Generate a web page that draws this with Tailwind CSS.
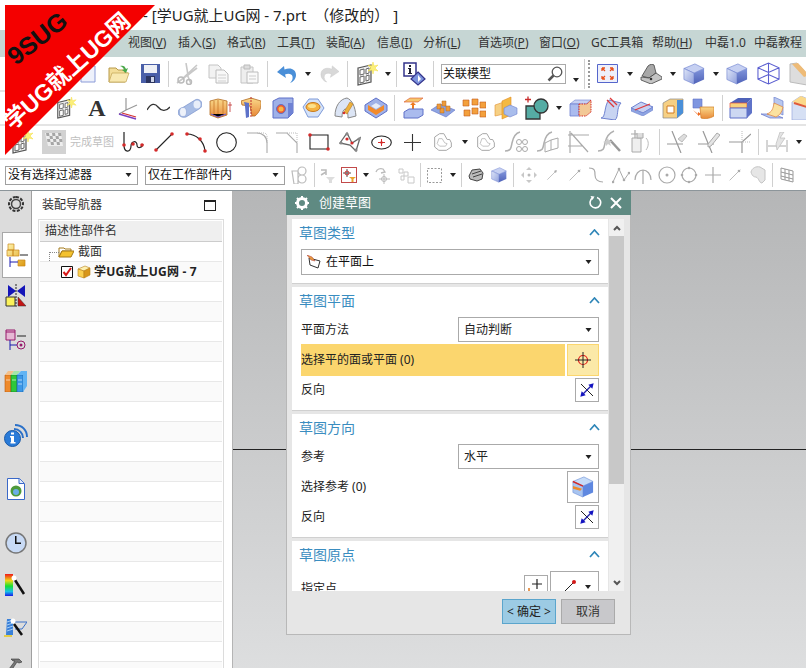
<!DOCTYPE html>
<html lang="en">
  <head>
    <meta charset="UTF-8" />
    <title>创建草图</title>
    <script src="https://cdn.jsdelivr.net/npm/@tailwindcss/browser@4"></script>
  </head>
  <body class="bg-white">
    <!-- shared icons -->
    <svg class="absolute w-0 h-0">
      <defs>
        <linearGradient id="gb" x1="0" y1="0" x2="1" y2="1"><stop offset="0" stop-color="#dfe6f8" /><stop offset="1" stop-color="#8f9fdc" /></linearGradient>
        <linearGradient id="gbd" x1="0" y1="0" x2="0" y2="1"><stop offset="0" stop-color="#8296dc" /><stop offset="1" stop-color="#4f62b8" /></linearGradient>
        <linearGradient id="go" x1="0" y1="0" x2="0" y2="1"><stop offset="0" stop-color="#f9d98a" /><stop offset="1" stop-color="#e98a3a" /></linearGradient>
        <linearGradient id="gy" x1="0" y1="0" x2="1" y2="1"><stop offset="0" stop-color="#fff6b0" /><stop offset="1" stop-color="#dd9a10" /></linearGradient>
      </defs>
      <symbol id="dd" viewBox="0 0 6 4"><path d="M0 0h6L3 4z" fill="#222" /></symbol>
      <symbol id="cube" viewBox="0 0 24 24"><path d="M1 6l12-5 10 5-11 5z" fill="#c6d0f2" stroke="#6f82d0" stroke-width=".7" /><path d="M1 6l11 5v12L1 18z" fill="url(#gb)" stroke="#6f82d0" stroke-width=".7" /><path d="M12 11l11-5v12l-11 5z" fill="url(#gbd)" /></symbol>
      <symbol id="wire" viewBox="0 0 24 24"><path d="M1 6l11-5 11 5v12l-11 5L1 18zM1 6l11 5 11-5M12 11v12M12 1v12M1 18l11-5 11 5" fill="none" stroke="#5a5ed0" stroke-width="1.1" /></symbol>
      <symbol id="star" viewBox="0 0 24 24"><path d="M3 6l13-3v17L3 23z" fill="#eee" stroke="#555" stroke-width="1.2" /><path d="M5 8l4-1v5l-4 1zM11 7l3-1v5l-3 1zM5 15l4-1v6l-4 1zM11 14l3-1v5l-3 1z" fill="#fff" stroke="#666" stroke-width="1" /><path d="M18 0l1 4 4-1-3 3 3 3-4-1-1 4-1-4-4 1 3-3-3-3 4 1z" fill="#fbef7a" stroke="#f3dc40" stroke-width=".5" /></symbol>
      <symbol id="flip" viewBox="0 0 24 24"><path d="M3 3l18 18" stroke="#111" stroke-width="1.400" /><path d="M5 19L19 5" stroke="#22a" stroke-width="2" /><path d="M22 2l-2 8-6-6zM2 22l2-8 6 6z" fill="#1414c0" /></symbol>
      <symbol id="gshape" viewBox="0 0 24 24"><path d="M2 6l6-4h5l4 7h3l2 4v5l-6 4H7l-5-4z" fill="none" stroke="#a8a8a8" stroke-width="1.2" /><path d="M7 8h4l3 5 3 1-2 3H8l-3-3z" fill="none" stroke="#b8b8b8" /></symbol>
      <symbol id="gdot" viewBox="0 0 24 24"><path d="M4 20L20 4" stroke="#aaa" stroke-width="1.2" /><circle cx="18" cy="6" r="2" fill="#aaa" /></symbol>
    </svg>

    <div class="relative w-[806px] h-[668px] overflow-hidden font-['Noto_Sans','Noto_Sans_CJK_SC',sans-serif] text-[12px] text-[#222]">
      <!-- title -->
      <div class="h-[30px] pl-[143px] flex items-center text-[15px] text-[#222] bg-white whitespace-pre">- [学UG就上UG网 - 7.prt  （修改的） ]</div>

      <!-- menu -->
      <div class="h-[27px] pb-[2px] bg-[#c6d6d4] flex items-center pl-[128px] text-[#333] whitespace-nowrap">
        <span class="w-[50px]">视图(<u>V</u>)</span>
        <span class="w-[49px]">插入(<u>S</u>)</span>
        <span class="w-[50px]">格式(<u>R</u>)</span>
        <span class="w-[49px]">工具(<u>T</u>)</span>
        <span class="w-[51px]">装配(<u>A</u>)</span>
        <span class="w-[46px]">信息(<u>I</u>)</span>
        <span class="w-[55px]">分析(<u>L</u>)</span>
        <span class="w-[61px]">首选项(<u>P</u>)</span>
        <span class="w-[52px]">窗口(<u>O</u>)</span>
        <span class="w-[61px]">GC工具箱</span>
        <span class="w-[53px]">帮助(<u>H</u>)</span>
        <span class="w-[49px]">中磊1.0</span>
        <span>中磊教程</span>
      </div>

      <!-- toolbar row 1 -->
      <div class="h-[33px] flex items-center overflow-hidden">
        <svg class="w-[16px] h-[18px] ml-[80px] shrink-0" viewBox="0 0 16 18"><path d="M1 1h14v16H1z" fill="#eef1fb" stroke="#8b9bd8" /></svg>
        <svg class="w-[22px] h-[20px] ml-[12px] shrink-0" viewBox="0 0 22 20"><path d="M1 18V4h7l2 2h7v3h3l-3 9z" fill="#f3dd98" stroke="#b89a4a" /><path d="M4 9h17l-3 9H1z" fill="#f8e8b0" stroke="#c2a454" stroke-width=".7" /><path d="M12 2c3-1 5 0 6 3l2-1-2 5-4-3 2-.5c-1-2-2-3-4-3.5z" fill="#4aa84a" /></svg>
        <svg class="w-[19px] h-[19px] ml-[11px] shrink-0" viewBox="0 0 19 19"><path d="M0 0h19v19H0z" fill="#4a5fa8" /><path d="M3 1h13v8H3z" fill="#eef0f5" /><path d="M5 12h9v7H5z" fill="#2c3560" /><path d="M10 13h3v5h-3z" fill="#cfd6ea" /></svg>
        <div class="w-px h-[26px] ml-[8px] bg-[#d0d0d0] shrink-0"></div>
        <svg class="w-[22px] h-[22px] ml-[7px] shrink-0" viewBox="0 0 22 22"><path d="M1 20L21 5 11 13M21 2L5 17" fill="none" stroke="#c8c8c8" stroke-width="1.6" /><path d="M10 0l2 12M15 21l-4-10" stroke="#c8c8c8" stroke-width="1.6" /><circle cx="5" cy="17" r="3" fill="none" stroke="#bbb" stroke-width="1.5" /><circle cx="13" cy="19" r="2.5" fill="none" stroke="#bbb" stroke-width="1.5" /></svg>
        <svg class="w-[21px] h-[20px] ml-[10px] shrink-0" viewBox="0 0 21 20"><path d="M1 1h9l3 3v10H1z" fill="#f2f2f2" stroke="#c4c4c4" /><path d="M8 6h8l4 4v9H8z" fill="#f8f8f8" stroke="#bcbcbc" /><path d="M10 11h8M10 14h8M10 17h8" stroke="#d0d0d0" /></svg>
        <svg class="w-[19px] h-[20px] ml-[11px] shrink-0" viewBox="0 0 19 20"><path d="M1 3h12v16H1z" fill="#eee" stroke="#c4c4c4" /><path d="M4 1h6v4H4z" fill="#ddd" stroke="#bbb" /><path d="M7 8h11v11H7z" fill="#fafafa" stroke="#bcbcbc" /><path d="M9 12h7M9 15h7" stroke="#ccc" /></svg>
        <div class="w-px h-[26px] ml-[8px] bg-[#d0d0d0] shrink-0"></div>
        <svg class="w-[20px] h-[20px] ml-[9px] shrink-0" viewBox="0 0 20 20"><path d="M0 8l7-6 .5 3.500C13 3 19 5 19 11c0 4-3 7-6 8 2-2 3-4 2.500-6.500C15 9.500 11 9 8 10.500L9 14z" fill="#4a8fd8" /></svg>
        <svg class="w-[6px] h-[4px] ml-[8px] shrink-0"><use href="#dd" /></svg>
        <svg class="w-[19px] h-[19px] ml-[9px] shrink-0" viewBox="0 0 20 20"><path d="M20 8l-7-6-.5 3.500C7 3 1 5 1 11c0 4 3 7 6 8-2-2-3-4-2.500-6.500C5 9.500 9 9 12 10.500L11 14z" fill="#d8d8d8" stroke="#c8c8c8" stroke-width=".5" /></svg>
        <div class="w-px h-[26px] ml-[8px] bg-[#d0d0d0] shrink-0"></div>
        <svg class="w-[24px] h-[24px] ml-[7px] shrink-0"><use href="#star" /></svg>
        <svg class="w-[6px] h-[4px] ml-[6px] shrink-0"><use href="#dd" /></svg>
        <div class="w-px h-[26px] ml-[5px] bg-[#d0d0d0] shrink-0"></div>
        <svg class="w-[23px] h-[24px] ml-[6px] shrink-0" viewBox="0 0 23 24"><path d="M1 1h12v13H1z" fill="#fff" stroke="#33338a" stroke-width="1.5" /><path d="M6 3h2v2H6zM5 6h3v5h1v1H5v-1h1V7H5z" fill="#223" /><path d="M15 10l7 7-7 6-7-6z" fill="#7c93dd" stroke="#33338a" stroke-width="1.2" /><path d="M15 13l3 4-3 3z" fill="#fff" /></svg>
        <div class="w-px h-[26px] ml-[7px] bg-[#d0d0d0] shrink-0"></div>
        <div class="w-[125px] h-[20px] ml-[7px] shrink-0 border border-[#aaa] flex items-center pl-[1px] pr-[2px] justify-between text-[#111]">
          <span>关联模型</span>
          <svg class="w-[16px] h-[16px]" viewBox="0 0 16 16"><circle cx="10" cy="6" r="4.800" fill="#fff" stroke="#555" stroke-width="1.300" /><path d="M6.500 9.500L1.500 14.500" stroke="#555" stroke-width="2.500" /></svg>
        </div>
        <svg class="w-[6px] h-[4px] ml-[7px] mt-[12px] shrink-0"><use href="#dd" /></svg>
        <div class="w-px h-[30px] ml-[5px] bg-[#d0d0d0] shrink-0"></div>
        <div class="w-[2px] h-[28px] ml-[3px] shrink-0 border-l-2 border-dotted border-[#999]"></div>
        <svg class="w-[21px] h-[19px] ml-[7px] shrink-0" viewBox="0 0 21 19"><path d="M.5.5h20v18H.5z" fill="#eef0fb" stroke="#5566cc" /><path d="M5 4l3 3M5 4h3M5 4v3M16 4l-3 3M16 4h-3M16 4v3M5 15l3-3M5 15h3M5 15v-3M16 15l-3-3M16 15h-3M16 15v-3" stroke="#e8501c" stroke-width="1.300" fill="none" /></svg>
        <svg class="w-[6px] h-[4px] ml-[9px] shrink-0"><use href="#dd" /></svg>
        <svg class="w-[22px] h-[20px] ml-[7px] shrink-0" viewBox="0 0 22 20"><path d="M2 12L8 2c2-2 5-2 6-1l2 8-7 5z" fill="#a8a8a8" stroke="#444" stroke-width=".8" /><path d="M1 13l8 1 7-5 6 4v2l-11 5-10-4z" fill="#c4c4c4" stroke="#444" stroke-width=".8" /><circle cx="11" cy="15" r="1.300" fill="#333" /></svg>
        <svg class="w-[6px] h-[4px] ml-[8px] shrink-0"><use href="#dd" /></svg>
        <svg class="w-[22px] h-[22px] ml-[7px] shrink-0"><use href="#cube" /></svg>
        <svg class="w-[6px] h-[4px] ml-[8px] shrink-0"><use href="#dd" /></svg>
        <svg class="w-[22px] h-[22px] ml-[7px] shrink-0"><use href="#cube" /></svg>
        <svg class="w-[23px] h-[23px] ml-[9px] shrink-0"><use href="#wire" /></svg>
        <svg class="w-[24px] h-[24px] ml-[9px] shrink-0" viewBox="0 0 24 24"><path d="M1 2l7-1 12 13-2 9-17-3z" fill="#ddd" stroke="#bbb" /><path d="M3 2l6-1 11 12-5 2z" fill="#eebb77" /></svg>
      </div>

      <!-- toolbar row 2 -->
      <div class="h-[34px] border-t-2 border-[#e4e4e4] flex items-center overflow-hidden">
        <svg class="w-[22px] h-[22px] ml-[55px] shrink-0"><use href="#star" /></svg>
        <span class="w-[20px] ml-[10px] shrink-0 text-center text-[24px] leading-none font-bold font-['Liberation_Serif',serif] text-[#333]">A</span>
        <svg class="w-[20px] h-[24px] ml-[11px] shrink-0" viewBox="0 0 20 24"><path d="M8 14V2M8 14L19 9M8 14L1 18" stroke="#999" stroke-width="1.200" /><path d="M1 18l17 5" stroke="#7a3fc0" stroke-width="1.500" /><path d="M4 17l14 4" stroke="#d43030" stroke-width="1.200" /></svg>
        <svg class="w-[23px] h-[10px] ml-[9px] shrink-0" viewBox="0 0 23 10"><path d="M0 7C4 0 8 0 11 4s8 5 12 0" fill="none" stroke="#333" stroke-width="1.300" /></svg>
        <svg class="w-[24px] h-[20px] ml-[8px] shrink-0" viewBox="0 0 24 20"><path d="M4 10L17 2c3-2 7 1 7 4 0 2-1 4-3 5L8 19c-4 1-8-1-8-5 0-2 2-4 4-4z" fill="#a7bce4" stroke="#7a92cc" stroke-width=".7" /><ellipse cx="19" cy="6.500" rx="3.500" ry="4" fill="#e8eef9" /><ellipse cx="5" cy="14" rx="3.500" ry="4.500" fill="#eef2fa" stroke="#8aa0d4" stroke-width=".6" /></svg>
        <svg class="w-[23px] h-[22px] ml-[7px] shrink-0" viewBox="0 0 23 22"><path d="M1 4l8-2 9 2v14l-9 3-8-3z" fill="url(#go)" stroke="#b36a20" stroke-width=".8" /><path d="M5 4v15M9 3v18M14 4v15" stroke="#c8772a" stroke-width=".8" /><path d="M2 17l7 3 8-3" stroke="#7a5fd0" /><path d="M21 5v10M19 8h4" stroke="#c03030" stroke-width=".8" /></svg>
        <svg class="w-[20px] h-[22px] ml-[9px] shrink-0" viewBox="0 0 20 22"><path d="M0 4l10-3 10 3c1 6-2 12-6 15h-3L9 9 1 8z" fill="url(#go)" stroke="#b36a20" stroke-width=".8" /><path d="M3 5l5 1v14l-3 1-1-12z" fill="#5d72c9" /><path d="M10 0v20" stroke="#c03030" stroke-dasharray="2 1" /></svg>
        <svg class="w-[22px] h-[22px] ml-[11px] shrink-0" viewBox="0 0 22 22"><path d="M1 4l6-3h14v15l-5 5H1z" fill="#9fb1e8" stroke="#5f70c8" /><path d="M16 6h5v10l-5 5z" fill="#6f82d4" /><circle cx="9" cy="12" r="4.500" fill="#f05a30" stroke="#5f70c8" /><circle cx="9" cy="12" r="2.500" fill="#f6b94a" /></svg>
        <svg class="w-[23px] h-[20px] ml-[8px] shrink-0" viewBox="0 0 23 20"><path d="M1 9l6-8h9l6 9-6 9H6z" fill="#d4e2f8" stroke="#7e9ad8" /><ellipse cx="11" cy="9" rx="7" ry="4.500" fill="#f5b342" stroke="#c7791c" /><ellipse cx="10" cy="8" rx="4" ry="2" fill="#fbe18c" /></svg>
        <svg class="w-[23px] h-[22px] ml-[9px] shrink-0" viewBox="0 0 23 22"><path d="M1 19C1 9 6 2 13 1c5 2 8 8 9 18l-8 2c0-6-1-9-3-9-2 1-3 4-3 8z" fill="#dce5f5" stroke="#888" /><path d="M10 15l6-10 3 2-6 10z" fill="#edb13c" stroke="#b8791e" stroke-width=".6" /><circle cx="10" cy="16" r="1.300" fill="#d43030" /></svg>
        <svg class="w-[24px] h-[22px] ml-[7px] shrink-0" viewBox="0 0 24 22"><path d="M12 1l11 7v6l-11 7L1 14V8z" fill="#9fb1e8" stroke="#5f70c8" /><path d="M4 8l8 5 8-5v5l-8 5-8-5z" fill="#f28a2a" /><path d="M7 9l5 3 5-3-5-3z" fill="#e6ecfa" /></svg>
        <div class="w-px h-[26px] ml-[6px] bg-[#d0d0d0] shrink-0"></div>
        <svg class="w-[21px] h-[22px] ml-[8px] shrink-0" viewBox="0 0 21 22"><path d="M1 5l6-4h13l-5 4z" fill="#f5c66e" stroke="#d9502a" stroke-width=".6" /><path d="M9 14V8H7l3-3 3 3h-2v6z" fill="#ee7a20" /><path d="M1 15l5-3h14v6l-5 3H1z" fill="#aabbee" stroke="#5f70c8" /></svg>
        <svg class="w-[24px] h-[20px] ml-[7px] shrink-0" viewBox="0 0 24 20"><path d="M0 12l9-6 15 6-9 7z" fill="#8ea5e2" stroke="#5f70c8" stroke-width=".6" /><path d="M6 6h4v5H6zM11 3h4v5h-4zM15 8h4v5h-4zM9 10h4v5H9z" fill="#ee9a3a" stroke="#b36a20" stroke-width=".5" /></svg>
        <svg class="w-[24px] h-[20px] ml-[7px] shrink-0" viewBox="0 0 24 20"><g fill="#f3a03c" stroke="#c45a20" stroke-width=".6"><path d="M1 2h6v6H1zM10 1h6v6h-6zM18 4h6v6h-6zM2 12h6v6H2zM10 10h6v6h-6zM18 13h6v6h-6z" /></g></svg>
        <svg class="w-[24px] h-[24px] ml-[8px] shrink-0" viewBox="0 0 24 24"><path d="M1 9l9-3v12l-9 2z" fill="#f6d084" stroke="#e09030" stroke-width=".6" /><path d="M8 5l9-4v18l-9 4z" fill="#f4b942" stroke="#e08a20" stroke-width=".6" /><path d="M10 12l6-3 7 3v6l-7 3-6-3z" fill="#a9bdec" stroke="#6f82d0" stroke-width=".6" /></svg>
        <svg class="w-[24px] h-[24px] ml-[7px] shrink-0" viewBox="0 0 24 24"><path d="M1 10h14v13H1z" fill="#55aca4" stroke="#333" stroke-width="1.300" /><circle cx="16" cy="10" r="7" fill="#55aca4" stroke="#333" stroke-width="1.300" /><path d="M0 3.500h6M3 .5v6" stroke="#c92b2b" stroke-width="1.300" /></svg>
        <svg class="w-[6px] h-[4px] ml-[7px] shrink-0"><use href="#dd" /></svg>
        <svg class="w-[23px] h-[18px] ml-[7px] shrink-0" viewBox="0 0 23 18"><path d="M1 5l5-4h16l-5 4z" fill="#c6d0f2" stroke="#6f82d0" stroke-width=".6" /><path d="M1 5h9v12H1z" fill="#aabbee" stroke="#6f82d0" stroke-width=".8" /><path d="M10 5h8l4-4v12l-5 4h-7z" fill="#f2c896" stroke="#d42a2a" stroke-dasharray="1.500 1" /></svg>
        <svg class="w-[22px] h-[23px] ml-[8px] shrink-0" viewBox="0 0 22 23"><path d="M1 21c5 0 3-13 8-18l12 3c-5 5-2 14-6 17z" fill="#c8d4f2" stroke="#6f82d0" /><path d="M7 3l7 7M10 1l7 7" stroke="#e03a3a" stroke-width="1.300" /></svg>
        <svg class="w-[22px] h-[15px] ml-[9px] shrink-0" viewBox="0 0 22 15"><path d="M0 7l10-6 12 5-10 6z" fill="#c6d0f2" stroke="#6f82d0" /><path d="M0 7v3l12 5 10-6V6l-10 6z" fill="#8ea5e2" stroke="#6f82d0" stroke-width=".6" /><path d="M4 9L19 3" stroke="#e03a3a" stroke-width="1.200" /></svg>
        <svg class="w-[22px] h-[22px] ml-[9px] shrink-0" viewBox="0 0 22 22"><path d="M1 6l7-4h13v14l-6 5H1z" fill="#f6d084" stroke="#888" stroke-width=".7" /><path d="M5 9h7v7H5z" fill="#fff" stroke="#d07a20" /><path d="M15 3h6v13l-6 5z" fill="#4a8fd8" /></svg>
        <svg class="w-[22px] h-[22px] ml-[8px] shrink-0" viewBox="0 0 22 22"><path d="M1 2h9v9H1z" fill="#7f96e0" stroke="#5f70c8" stroke-width=".6" /><path d="M8 10h14v9c-5 3-10 3-13 2z" fill="url(#go)" stroke="#d07a20" stroke-width=".7" /><path d="M1 13l5 4v-2l3 2-3 2v-1z" fill="#ee6a20" /></svg>
        <div class="w-px h-[26px] ml-[8px] bg-[#d0d0d0] shrink-0"></div>
        <svg class="w-[24px] h-[22px] ml-[6px] shrink-0" viewBox="0 0 24 22"><path d="M1 6l8-5h14l-5 5z" fill="#4f62b8" /><path d="M1 6h17v5H1z" fill="#f8d27e" stroke="#e0503a" stroke-width=".7" /><path d="M1 11h17v10H1z" fill="#cdd8f2" stroke="#5f70c8" /><path d="M18 6l5-5v15l-5 5z" fill="#5f73c8" /></svg>
        <svg class="w-[23px] h-[22px] ml-[8px] shrink-0" viewBox="0 0 23 22"><path d="M13 0l9 4v14l-9-4z" fill="#b8c7ee" stroke="#6f82d0" stroke-width=".7" /><path d="M0 17l9 4h13l-9-4z" fill="#b8c7ee" stroke="#5f70c8" stroke-width=".7" /><path d="M6 17c5-2 6-5 7-11l9 4c-1 5-3 8-7 10z" fill="#fbe2a0" stroke="#e0803a" stroke-width=".7" /></svg>
        <svg class="w-[24px] h-[24px] ml-[7px] shrink-0" viewBox="0 0 24 24"><path d="M1 6l9-6 14 6v18H1z" fill="#d6e0f4" stroke="#98a8dc" stroke-width=".7" /><path d="M1 6l9-6 14 6-9 4z" fill="#fbd98a" /><path d="M3 7l13 4" stroke="#e05a3a" stroke-width="2" /></svg>
      </div>

      <!-- toolbar row 3 -->
      <div class="h-[34px] border-t-2 border-[#e4e4e4] flex items-center overflow-hidden">
        <svg class="w-[24px] h-[24px] ml-[10px] shrink-0"><use href="#star" /></svg>
        <svg class="w-[24px] h-[24px] ml-[8px] shrink-0" viewBox="0 0 24 24"><path d="M0 0h24v24H0z" fill="#d2d2d2" /><path d="M3 3h16l2 13H6z" fill="#eee" /><path d="M4 3h3l.5 3h-3zM10 3h3l.5 3h-3zM16 3h3l.5 3h-3zM7.500 6h3l.5 3H8zM13.500 6h3l.5 3h-3zM5 9h3l.5 3h-3zM11 9h3l.5 3h-3zM17 9h3l.5 3h-3zM8.500 12h3l.5 3H9zM14.500 12h3l.5 3h-3z" fill="#a6a6a6" /></svg>
        <span class="w-[44px] ml-[4px] shrink-0 text-[11px] text-[#c0c0c0] whitespace-nowrap">完成草图</span>
        <svg class="w-[22px] h-[22px] ml-[8px] shrink-0" viewBox="0 0 22 22"><path d="M2 1v13c0 8 7 8 7 1 0-5 6-6 6-1 0 4 5 3 6-1" fill="none" stroke="#222" stroke-width="1.200" /><circle cx="2" cy="14" r="1.800" fill="#d42a2a" /><circle cx="11" cy="13" r="1.800" fill="#d42a2a" /><circle cx="20" cy="14" r="1.800" fill="#d42a2a" /></svg>
        <svg class="w-[20px] h-[20px] ml-[10px] shrink-0" viewBox="0 0 20 20"><path d="M2 18L18 2" stroke="#222" stroke-width="1.100" /><circle cx="2" cy="18" r="1.800" fill="#d42a2a" /><circle cx="18" cy="2" r="1.800" fill="#d42a2a" /></svg>
        <svg class="w-[22px] h-[21px] ml-[11px] shrink-0" viewBox="0 0 22 21"><path d="M2 2c9 0 17 7 18 17" fill="none" stroke="#222" stroke-width="1.200" /><circle cx="2" cy="2" r="1.800" fill="#d42a2a" /><circle cx="15" cy="7" r="1.800" fill="#d42a2a" /><circle cx="20" cy="19" r="1.800" fill="#d42a2a" /></svg>
        <svg class="w-[21px] h-[21px] ml-[9px] shrink-0" viewBox="0 0 21 21"><circle cx="10.500" cy="10.500" r="9.800" fill="none" stroke="#222" stroke-width="1.100" /></svg>
        <svg class="w-[21px] h-[21px] ml-[10px] shrink-0" viewBox="0 0 21 21"><path d="M0 1h10c6 0 10 4 10 10v10" fill="none" stroke="#aaa" stroke-width="1.100" /><path d="M10 1h8l2 2v8" fill="none" stroke="#bbb" stroke-dasharray="1 1" /></svg>
        <svg class="w-[22px] h-[21px] ml-[8px] shrink-0" viewBox="0 0 22 21"><path d="M0 1h11l10 10v10" fill="none" stroke="#aaa" stroke-width="1.100" /><path d="M11 1h10v10" fill="none" stroke="#bbb" stroke-dasharray="1 1" /></svg>
        <svg class="w-[22px] h-[18px] ml-[10px] shrink-0" viewBox="0 0 22 18"><path d="M2 2h18v14H2z" fill="none" stroke="#222" stroke-width="1.100" /><circle cx="2" cy="2" r="1.800" fill="#d42a2a" /><circle cx="20" cy="16" r="1.800" fill="#d42a2a" /></svg>
        <svg class="w-[22px] h-[22px] ml-[9px] shrink-0" viewBox="0 0 22 22"><path d="M1 12L8 2l5 10 8-5-4 13-6-6z" fill="none" stroke="#666" stroke-width="1.300" /><circle cx="8" cy="3" r="1.600" fill="#888" /><circle cx="8" cy="8" r="1.600" fill="#d42a2a" /><circle cx="13" cy="12" r="1.600" fill="#d42a2a" /><circle cx="20" cy="8" r="1.600" fill="#888" /><circle cx="17" cy="19" r="1.600" fill="#888" /><circle cx="2" cy="12" r="1.600" fill="#888" /></svg>
        <svg class="w-[21px] h-[15px] ml-[10px] shrink-0" viewBox="0 0 21 15"><ellipse cx="10.500" cy="7.500" rx="9.800" ry="6.500" fill="none" stroke="#222" stroke-width="1.100" /><path d="M10.500 4v7M7 7.500h7" stroke="#d42a2a" /><circle cx="10.500" cy="7.500" r="1.300" fill="#d42a2a" /></svg>
        <svg class="w-[17px] h-[17px] ml-[12px] shrink-0" viewBox="0 0 17 17"><path d="M8.500 0v17M0 8.500h17" stroke="#333" stroke-width="1.100" /></svg>
        <svg class="w-[20px] h-[20px] ml-[12px] shrink-0"><use href="#gshape" /></svg>
        <svg class="w-[6px] h-[4px] ml-[9px] shrink-0"><use href="#dd" /></svg>
        <svg class="w-[20px] h-[20px] ml-[8px] shrink-0"><use href="#gshape" /></svg>
        <svg class="w-[23px] h-[22px] ml-[9px] shrink-0" viewBox="0 0 23 22"><path d="M0 20c6 0 6-3 7-8s4-10 8-11" fill="none" stroke="#b0b0b0" stroke-width="1.500" /><g fill="none" stroke="#aaa"><circle cx="14" cy="11" r="2.500" /><circle cx="20" cy="11" r="2.500" /><circle cx="14" cy="18" r="2.500" /><circle cx="20" cy="18" r="2.500" /></g></svg>
        <svg class="w-[22px] h-[22px] ml-[9px] shrink-0" viewBox="0 0 22 22"><path d="M0 20c6 0 6-3 7-8s4-10 8-11" fill="none" stroke="#b0b0b0" stroke-width="1.500" /><path d="M8 12l6-3v10l-6 2zM14 9l7-2v10l-7 2" fill="none" stroke="#aaa" /></svg>
        <svg class="w-[22px] h-[22px] ml-[9px] shrink-0" viewBox="0 0 22 22"><path d="M2 0v22M0 4h21M0 15h15M3 2l17 19" fill="none" stroke="#aaa" stroke-width="1.200" /></svg>
        <svg class="w-[24px] h-[24px] ml-[8px] shrink-0" viewBox="0 0 24 24"><path d="M0 21c6 0 6-3 7-8s4-10 9-12" fill="none" stroke="#b0b0b0" stroke-width="1.500" /><path d="M12 10l10 11" stroke="#999" stroke-width="2.500" /><path d="M10 8l1 3 3 0-2 2 1 3-3-2-2 2v-3l-3-1 3-1z" fill="#ccc" /></svg>
        <svg class="w-[22px] h-[24px] ml-[8px] shrink-0" viewBox="0 0 22 24"><path d="M2 8h9v14H2z" fill="#efefef" stroke="#aaa" /><path d="M5 0v8M1 4h8" stroke="#aaa" stroke-width="1.200" /><path d="M7 3v5h6V3" fill="#ddd" stroke="#aaa" /><path d="M16 8c3 3 3 8 0 12" fill="none" stroke="#bbb" /></svg>
        <div class="w-px h-[26px] ml-[7px] bg-[#d0d0d0] shrink-0"></div>
        <svg class="w-[21px] h-[22px] ml-[7px] shrink-0" viewBox="0 0 21 22"><path d="M0 13h16M5 0l9 22" stroke="#999" stroke-width="1.200" /><path d="M11 8l6-5 3 2-5 6z" fill="#ddd" stroke="#bbb" /></svg>
        <svg class="w-[22px] h-[22px] ml-[10px] shrink-0" viewBox="0 0 22 22"><path d="M0 13h16M5 0l9 22" stroke="#999" stroke-width="1.200" /><path d="M10 13L19 2l3 2-9 11-3 1z" fill="#e4e4e4" stroke="#aaa" /></svg>
        <svg class="w-[22px] h-[22px] ml-[9px] shrink-0" viewBox="0 0 22 22"><path d="M0 11h13v11M13 11L22 3" fill="none" stroke="#999" stroke-width="1.200" /><path d="M13 0v11h9" fill="none" stroke="#bbb" stroke-dasharray="1 1" /></svg>
        <div class="w-px h-[26px] ml-[7px] bg-[#d0d0d0] shrink-0"></div>
        <svg class="w-[22px] h-[20px] ml-[7px] shrink-0" viewBox="0 0 22 20"><path d="M1 8v12M21 8v12M2 14h18" stroke="#aaa" /><path d="M10 12L14 0l4 0-4 6h5L11 18z" fill="#e4e4e4" stroke="#bbb" stroke-width=".7" /></svg>
        <svg class="w-[6px] h-[4px] ml-[8px] shrink-0"><use href="#dd" /></svg>
      </div>

      <!-- filter row -->
      <div class="h-[32px] border-t-2 border-[#e4e4e4] flex items-center overflow-hidden">
        <div class="w-[133px] h-[19px] ml-[5px] shrink-0 border border-[#a0a0a0] pl-[2px] pr-[5px] flex items-center justify-between">
          <span class="text-[#111]">没有选择过滤器</span><svg class="w-[7px] h-[4px]"><use href="#dd" /></svg>
        </div>
        <div class="w-[140px] h-[19px] ml-[7px] shrink-0 border border-[#a0a0a0] pl-[2px] pr-[5px] flex items-center justify-between">
          <span class="text-[#111]">仅在工作部件内</span><svg class="w-[7px] h-[4px]"><use href="#dd" /></svg>
        </div>
        <svg class="w-[18px] h-[18px] ml-[6px] shrink-0" viewBox="0 0 18 18"><path d="M1 5h6v13H3zM11 1a4 4 0 1 1 0 8 4 4 0 0 1 0-8zM11 9a4 4 0 1 1 0 8 4 4 0 0 1 0-8z" fill="none" stroke="#bbb" stroke-width="1.200" /></svg>
        <div class="w-px h-[24px] ml-[5px] bg-[#d0d0d0] shrink-0"></div>
        <svg class="w-[15px] h-[15px] ml-[5px] shrink-0" viewBox="0 0 15 15"><path d="M1 2h5v5M6 4L1 7" fill="none" stroke="#bbb" stroke-width="1.500" /><path d="M6 9h9l-3 3v3h-3v-3z" fill="#ddd" /></svg>
        <div class="w-[16px] h-[16px] ml-[6px] shrink-0 border border-[#c24a4a] bg-white flex items-center justify-center">
          <svg class="w-[13px] h-[13px]" viewBox="0 0 13 13"><path d="M4 0v8M0 4h8" stroke="#555" /><circle cx="4" cy="4" r="2" fill="none" stroke="#c33" /><path d="M6 8h7l-2.500 2v3h-2v-3z" fill="#e9a42c" /></svg>
        </div>
        <svg class="w-[6px] h-[4px] ml-[6px] shrink-0"><use href="#dd" /></svg>
        <svg class="w-[15px] h-[17px] ml-[6px] shrink-0" viewBox="0 0 15 17"><path d="M1 5c1-3 4-4 7-3l2 3-4 1" fill="none" stroke="#bbb" stroke-width="1.300" /><path d="M9 7v10M4 12h11" stroke="#bbb" /><circle cx="9" cy="12" r="2.500" fill="none" stroke="#bbb" /></svg>
        <svg class="w-[17px] h-[17px] ml-[8px] shrink-0" viewBox="0 0 17 17"><path d="M1 2h4v4H1zM6 5h4v4H6zM3 9h3v4H3zM10 10h6v6h-6z" fill="none" stroke="#c8c8c8" /></svg>
        <div class="w-px h-[24px] ml-[5px] bg-[#d0d0d0] shrink-0"></div>
        <svg class="w-[15px] h-[15px] ml-[6px] shrink-0" viewBox="0 0 15 15"><path d="M.5.5h14v14H.5z" fill="none" stroke="#999" stroke-dasharray="2 1.500" /></svg>
        <svg class="w-[6px] h-[4px] ml-[8px] shrink-0"><use href="#dd" /></svg>
        <div class="w-px h-[24px] ml-[5px] bg-[#d0d0d0] shrink-0"></div>
        <svg class="w-[16px] h-[14px] ml-[6px] shrink-0" viewBox="0 0 16 14"><path d="M1 8l3-6 8-1 3 4-1 6-5 2-7-2z" fill="#bbb" stroke="#444" /><path d="M4 6l9-3M5 9l9-3" stroke="#444" /></svg>
        <svg class="w-[16px] h-[16px] ml-[7px] shrink-0"><use href="#cube" /></svg>
        <div class="w-px h-[24px] ml-[6px] bg-[#d0d0d0] shrink-0"></div>
        <svg class="w-[18px] h-[18px] ml-[6px] shrink-0" viewBox="0 0 18 18"><path d="M9 1l3 3H6zM9 17l3-3H6zM1 9l3-3v6zM17 9l-3-3v6z" fill="#c8c8c8" /><circle cx="9" cy="9" r="1.500" fill="#bbb" /></svg>
        <svg class="w-[14px] h-[14px] ml-[7px] shrink-0"><use href="#gdot" /></svg>
        <svg class="w-[16px] h-[16px] ml-[8px] shrink-0"><use href="#gdot" /></svg>
        <svg class="w-[16px] h-[16px] ml-[5px] shrink-0" viewBox="0 0 16 16"><path d="M1 1c6 0 6 3 6 7s3 7 8 7" fill="none" stroke="#aaa" stroke-width="1.200" /></svg>
        <svg class="w-[18px] h-[18px] ml-[8px] shrink-0" viewBox="0 0 18 18"><path d="M1 16L7 3l5 11 5-7" fill="none" stroke="#aaa" /><g fill="#aaa"><circle cx="7" cy="3" r="1.300" /><circle cx="12" cy="14" r="1.300" /><circle cx="17" cy="7" r="1.300" /><circle cx="1" cy="16" r="1.300" /></g></svg>
        <svg class="w-[18px] h-[18px] ml-[4px] shrink-0" viewBox="0 0 18 18"><path d="M1 14C1 8 5 4 9 4s8 4 8 10M9 4v14" fill="none" stroke="#aaa" stroke-width="1.200" /></svg>
        <svg class="w-[18px] h-[18px] ml-[6px] shrink-0" viewBox="0 0 18 18"><circle cx="9" cy="9" r="8" fill="none" stroke="#aaa" stroke-width="1.200" /><circle cx="9" cy="9" r="1.500" fill="#aaa" /></svg>
        <svg class="w-[18px] h-[18px] ml-[4px] shrink-0" viewBox="0 0 18 18"><circle cx="9" cy="9" r="7" fill="none" stroke="#aaa" stroke-width="1.200" /><g fill="#aaa"><circle cx="9" cy="2" r="1.300" /><circle cx="9" cy="16" r="1.300" /><circle cx="2" cy="9" r="1.300" /><circle cx="16" cy="9" r="1.300" /></g></svg>
        <svg class="w-[18px] h-[18px] ml-[6px] shrink-0" viewBox="0 0 18 18"><path d="M9 1v16M1 9h16" stroke="#aaa" stroke-width="1.200" /></svg>
        <svg class="w-[16px] h-[16px] ml-[5px] shrink-0"><use href="#gdot" /></svg>
        <svg class="w-[16px] h-[18px] ml-[7px] shrink-0" viewBox="0 0 16 18"><path d="M1 6c1-4 5-6 9-5l5 3v10l-3 3c-3 0-3-5-6-6-2 0-4-1-5-5z" fill="#e6e6e6" stroke="#c4c4c4" /></svg>
        <div class="w-px h-[24px] ml-[6px] bg-[#d0d0d0] shrink-0"></div>
        <svg class="w-[14px] h-[16px] ml-[7px] shrink-0" viewBox="0 0 14 16"><path d="M1 1l12 3v11L1 12zM5 2v11M9 3v11M1 5l12 3M1 9l12 3" fill="none" stroke="#999" /></svg>
      </div>

      <!-- main area -->
      <div class="relative h-[478px] flex border-t border-[#8c959a]">
        <!-- icon strip -->
        <div class="w-[32px] shrink-0 bg-[#dcdcdc] border-r border-[#a0a0a0] flex flex-col items-center overflow-hidden">
          <svg class="w-[16px] h-[16px] mt-[5px] shrink-0" viewBox="0 0 16 16"><path d="M8 1a7 7 0 1 1 0 14A7 7 0 0 1 8 1z" fill="none" stroke="#333" stroke-width="2" stroke-dasharray="3 1.500" /><circle cx="8" cy="8" r="4.500" fill="none" stroke="#444" stroke-width="1.500" /></svg>
          <div class="w-[30px] h-[46px] mt-[20px] ml-[1px] shrink-0 bg-white border border-r-0 border-[#a8a8a8] flex items-center justify-center relative z-10 -mr-px">
            <svg class="w-[22px] h-[25px]" viewBox="0 0 22 25"><g fill="url(#gy)" stroke="#c8861a" stroke-width=".7"><path d="M2 1h6v6H2zM1 7h6v6H1zM7 7h6v6H7zM12 17h7v6h-7z" /></g><path d="M4 14v10M4 19h8" stroke="#1a1ab0" stroke-width="1" /><path d="M14 12h8" stroke="#222" /></svg>
          </div>
          <svg class="w-[22px] h-[23px] mt-[6px] shrink-0" viewBox="0 0 22 23"><path d="M3 1l8 6-8 6zM20 1l-8 6 8 6z" fill="#1414b8" /><path d="M11 0v23" stroke="#222" stroke-dasharray="2 1" /><path d="M1 13h9v9H1z" fill="#fbf25a" stroke="#333" /><path d="M13 13l8 9h-8z" fill="#c41414" stroke="#333" stroke-width=".5" /></svg>
          <svg class="w-[22px] h-[22px] mt-[21px] shrink-0" viewBox="0 0 22 22"><path d="M1 2h9v10H1z" fill="#e6b8d4" stroke="#96186a" /><path d="M1 4h9" stroke="#96186a" /><path d="M12 8h9" stroke="#222" /><path d="M5 12v10M5 17h7" stroke="#1a1ab0" /><circle cx="16" cy="17" r="4" fill="none" stroke="#96186a" /><circle cx="16" cy="17" r="1.500" fill="#96186a" /></svg>
          <svg class="w-[24px] h-[22px] mt-[20px] shrink-0" viewBox="0 0 24 22"><path d="M1 5h6v17H1z" fill="#ef8a2c" stroke="#b85a10" stroke-width=".6" /><path d="M1 5l3-4h6L7 5z" fill="#f5c08a" /><path d="M7 5h6v17H7z" fill="#2fc83a" stroke="#14801e" stroke-width=".6" /><path d="M7 5l3-4h6l-3 4z" fill="#a4e6a8" /><path d="M13 5h6v17h-6z" fill="#3c98e8" stroke="#1a62a8" stroke-width=".6" /><path d="M13 5l4-4h6l-4 4zM19 5l4-4v15l-4 6z" fill="#62b4f4" /><path d="M2 10h4M8 10h4M14 10h4M14 14h4" stroke="#fff" stroke-width=".6" /></svg>
          <svg class="w-[24px] h-[23px] mt-[32px] shrink-0" viewBox="0 0 24 23"><circle cx="8.500" cy="14.500" r="8" fill="#2a7bd8" stroke="#1a5aa8" /><path d="M7 8.500h3v2H7zM6 12h4v6h1.500v1.500h-5V18H7v-4.500H6z" fill="#fff" /><path d="M10 5c5 0 9 4 9 9M11 1c7 0 12 5 12 12" fill="none" stroke="#2a70c8" stroke-width="2" /></svg>
          <svg class="w-[18px] h-[22px] mt-[31px] shrink-0" viewBox="0 0 18 22"><path d="M.5.500h12l5 5v16H.5z" fill="#fff" stroke="#3a68c8" /><path d="M12 .5v5h5" fill="#dfe8fa" stroke="#3a68c8" /><circle cx="9" cy="13" r="5.500" fill="#4e9a3a" /><circle cx="9" cy="14" r="3" fill="#6aaee8" /></svg>
          <svg class="w-[22px] h-[22px] mt-[32px] shrink-0" viewBox="0 0 22 22"><circle cx="11" cy="11" r="10" fill="#c8daf5" stroke="#777" stroke-width="1.500" /><path d="M10 4v8h6v-1.500h-4.500V4z" fill="#111" /></svg>
          <svg class="w-[21px] h-[23px] mt-[20px] shrink-0" viewBox="0 0 21 23"><defs><linearGradient id="rb" x1="0" y1="0" x2="0" y2="1"><stop offset="0" stop-color="#f01818" /><stop offset=".3" stop-color="#f0d818" /><stop offset=".55" stop-color="#18e030" /><stop offset=".8" stop-color="#18c0e8" /><stop offset="1" stop-color="#1818e8" /></linearGradient></defs><path d="M0 0h8v22H0z" fill="url(#rb)" /><path d="M10 6l9 14" stroke="#111" stroke-width="2.500" /><circle cx="9" cy="4" r="2.500" fill="#fff" /></svg>
          <svg class="w-[23px] h-[21px] mt-[20px] shrink-0" viewBox="0 0 23 21"><path d="M3 2h6v16H2z" fill="#3a80d8" /><path d="M3 5l6-2M3 8l6-2M3 11l6-2M3 14l6-2" stroke="#a4ccf4" /><path d="M9 5h14l-5 7h-7" fill="none" stroke="#3a70c8" /><path d="M10 7l8 11" stroke="#111" stroke-width="2.500" /><circle cx="9" cy="4" r="2.500" fill="#fff" /><path d="M0 19h8" stroke="#e8c818" stroke-width="1.500" /></svg>
          <svg class="w-[15px] h-[15px] mt-[20px] shrink-0" viewBox="0 0 15 15"><path d="M3 1h8l3 3-3 1-2-1-6 9-2-2 6-8H5z" fill="#777" stroke="#333" stroke-width=".6" /></svg>
        </div>

        <!-- navigator -->
        <div class="w-[201px] shrink-0 bg-white border-r border-[#b4b4b4] overflow-hidden">
          <div class="h-[28px] pl-[10px] pr-[16px] flex items-center justify-between text-[#333]">
            <span>装配导航器</span>
            <div class="w-[12px] h-[11px] border border-[#222] border-t-2"></div>
          </div>
          <div class="w-[186px] h-[460px] ml-[6px] border-x border-t border-[#dcdcdc] px-px pt-px">
            <div class="h-[21px] pl-[5px] bg-[#efefef] border-b border-[#ccc] flex items-center text-[#333]">描述性部件名</div>
            <div class="relative flex flex-col [&>div]:h-[20px] [&>div]:shrink-0 [&>div]:border-b [&>div]:border-[#e8e8e8] [&>div:nth-child(even)]:bg-[#fafafa]">
              <!-- tree connectors -->
              <span class="absolute left-[9px] top-[10px] w-[10px] h-[21px] border-l border-b border-dotted border-[#888]"></span>
              <span class="absolute left-[9px] top-[10px] w-[10px] border-t border-dotted border-[#888]"></span>
              <div class="flex items-center pl-[18px] gap-[4px] text-[#333]">
                <svg class="w-[16px] h-[12px] shrink-0" viewBox="0 0 16 12"><path d="M1 11V2h5l1 1h6v2H4z" fill="#fff" stroke="#a47a1a" /><path d="M1 11l3-6h12l-3 6z" fill="#f4c22e" stroke="#a47a1a" /></svg>
                <span>截面</span>
              </div>
              <div class="flex items-center pl-[21px] font-bold text-[#222] relative">
                <svg class="w-[12px] h-[12px] shrink-0" viewBox="0 0 12 12"><path d="M.5.5h11v11H.5z" fill="#fff" stroke="#111" /><path d="M2.500 6l2.500 3 5-7" fill="none" stroke="#d81818" stroke-width="2" /></svg>
                <svg class="w-[14px] h-[14px] ml-[4px] shrink-0" viewBox="0 0 14 14"><path d="M1 4l7-3 5 2-6 3z" fill="#fdf0b0" stroke="#b8801a" stroke-width=".6" /><path d="M1 4l6 2v7l-6-2z" fill="#fbd050" stroke="#b8801a" stroke-width=".6" /><path d="M7 6l6-3v7l-6 3z" fill="#d8961a" stroke="#b8801a" stroke-width=".6" /></svg>
                <span class="ml-[3px] whitespace-nowrap tracking-[.2px]">学UG就上UG网 - 7</span>
              </div>
              <div></div><div></div><div></div><div></div><div></div><div></div><div></div><div></div><div></div><div></div>
              <div></div><div></div><div></div><div></div><div></div><div></div><div></div><div></div><div></div><div></div>
            </div>
          </div>
        </div>

        <!-- canvas -->
        <div class="flex-1 bg-gradient-to-b from-[#b5b6b7] to-[#dddedf] relative">
          <div class="absolute left-0 right-0 top-[258px] h-px bg-[#222]"></div>
        </div>

        <!-- dialog -->
        <div class="absolute left-[286px] top-[-1px] w-[345px] h-[445px] bg-[#e6e6e6] border-x border-b border-[#b8b8b8] flex flex-col">
          <div class="h-[25px] -mx-px bg-[#5f8a82] flex items-center pl-[9px] pr-[9px] text-white text-[13px] shrink-0">
            <svg class="w-[14px] h-[14px] shrink-0" viewBox="0 0 14 14"><circle cx="7" cy="7" r="4.500" fill="none" stroke="#fff" stroke-width="3" /><path d="M7 0v2M7 12v2M0 7h2M12 7h2M2 2l1.500 1.500M12 2l-1.500 1.500M2 12l1.500-1.500M12 12l-1.500-1.500" stroke="#fff" stroke-width="2" /></svg>
            <span class="ml-[10px]">创建草图</span>
            <svg class="w-[13px] h-[13px] ml-auto shrink-0" viewBox="0 0 13 13"><path d="M8 1.500a5.300 5.300 0 1 1-4 .3" fill="none" stroke="#fff" stroke-width="1.600" /><path d="M1.500 0l4 .5-2 3.500z" fill="#fff" /></svg>
            <svg class="w-[12px] h-[12px] ml-[8px] shrink-0" viewBox="0 0 12 12"><path d="M1 1l10 10M11 1L1 11" stroke="#fff" stroke-width="2" /></svg>
          </div>

          <div class="flex mt-[4px] ml-[5px] h-[372px] overflow-hidden">
            <!-- panel sections -->
            <div class="w-[316px] shrink-0 h-[372px] overflow-hidden text-[#222] flex flex-col">
              <div class="h-[64px] bg-white shrink-0 px-[9px]">
                <div class="h-[26px] flex items-center justify-between -ml-[2px] -mr-[1px] text-[14px] text-[#3a8dc0]">
                  <span>草图类型</span>
                  <svg class="w-[11px] h-[7px]" viewBox="0 0 11 7"><path d="M1 6l4.500-5L10 6" fill="none" stroke="#2f86b8" stroke-width="1.700" /></svg>
                </div>
                <div class="h-[26px] mt-[4px] border border-[#aaa] flex items-center pl-[5px] pr-[6px]">
                  <svg class="w-[14px] h-[14px] shrink-0" viewBox="0 0 14 14"><path d="M2 3l11 3-2 7-8-3z" fill="#fff" stroke="#333" /><path d="M0 0l5 2 3 4-4-1z" fill="#e8a040" stroke="#a33" stroke-width=".5" /></svg>
                  <span class="ml-[5px] text-[#111]">在平面上</span>
                  <svg class="w-[7px] h-[4px] ml-auto"><use href="#dd" /></svg>
                </div>
              </div>
              <div class="h-[4px] shrink-0 border-t border-[#d0d0d0]"></div>

              <div class="h-[123px] bg-white shrink-0 pl-[9px] pr-[9px]">
                <div class="h-[26px] flex items-center justify-between -ml-[2px] -mr-[1px] text-[14px] text-[#3a8dc0]">
                  <span>草图平面</span>
                  <svg class="w-[11px] h-[7px]" viewBox="0 0 11 7"><path d="M1 6l4.500-5L10 6" fill="none" stroke="#2f86b8" stroke-width="1.700" /></svg>
                </div>
                <div class="h-[25px] mt-[4px] flex items-center justify-between">
                  <span>平面方法</span>
                  <div class="w-[141px] h-[25px] border border-[#aaa] flex items-center pl-[5px] pr-[6px] justify-between">
                    <span>自动判断</span><svg class="w-[7px] h-[4px]"><use href="#dd" /></svg>
                  </div>
                </div>
                <div class="h-[32px] mt-[2px] flex justify-between">
                  <div class="w-[264px] bg-[#fbd66e] flex items-center">选择平的面或平面 (0)</div>
                  <div class="w-[32px] bg-[#fbe9a8] border border-[#fbd66e] flex items-center justify-center">
                    <svg class="w-[16px] h-[16px]" viewBox="0 0 16 16"><circle cx="8" cy="8" r="4.500" fill="none" stroke="#e01818" stroke-width="1.200" /><path d="M8 0v16M0 8h16" stroke="#222" /></svg>
                  </div>
                </div>
                <div class="h-[24px] mt-[2px] flex items-center justify-between">
                  <span>反向</span>
                  <div class="w-[24px] h-[24px] border border-[#aaa] flex items-center justify-center">
                    <svg class="w-[16px] h-[16px]"><use href="#flip" /></svg>
                  </div>
                </div>
              </div>
              <div class="h-[4px] shrink-0 border-t border-[#d0d0d0]"></div>

              <div class="h-[123px] bg-white shrink-0 pl-[9px] pr-[9px]">
                <div class="h-[26px] flex items-center justify-between -ml-[2px] -mr-[1px] text-[14px] text-[#3a8dc0]">
                  <span>草图方向</span>
                  <svg class="w-[11px] h-[7px]" viewBox="0 0 11 7"><path d="M1 6l4.500-5L10 6" fill="none" stroke="#2f86b8" stroke-width="1.700" /></svg>
                </div>
                <div class="h-[25px] mt-[4px] flex items-center justify-between">
                  <span>参考</span>
                  <div class="w-[141px] h-[25px] border border-[#aaa] flex items-center pl-[5px] pr-[6px] justify-between">
                    <span>水平</span><svg class="w-[7px] h-[4px]"><use href="#dd" /></svg>
                  </div>
                </div>
                <div class="h-[32px] mt-[2px] flex items-center justify-between">
                  <span>选择参考 (0)</span>
                  <div class="w-[32px] h-[32px] border border-[#aaa] flex items-center justify-center">
                    <svg class="w-[22px] h-[22px]" viewBox="0 0 24 24"><path d="M1 6l12-5 10 5-11 5z" fill="#c6dcf8" stroke="#6f92d8" stroke-width=".7" /><path d="M1 6l11 5v12L1 18z" fill="#a8c4f0" stroke="#6f92d8" stroke-width=".7" /><path d="M12 11l11-5v12l-11 5z" fill="#5f88e0" /><path d="M1 6l11 5" stroke="#d42a2a" stroke-width="1.500" /><path d="M1 11l10 3-2 2-8-2z" fill="#ee8a2a" /></svg>
                  </div>
                </div>
                <div class="h-[24px] mt-[2px] flex items-center justify-between">
                  <span>反向</span>
                  <div class="w-[24px] h-[24px] border border-[#aaa] flex items-center justify-center">
                    <svg class="w-[16px] h-[16px]"><use href="#flip" /></svg>
                  </div>
                </div>
              </div>
              <div class="h-[4px] shrink-0 border-t border-[#d0d0d0]"></div>

              <div class="h-[80px] bg-white shrink-0 pl-[9px] pr-[9px]">
                <div class="h-[26px] flex items-center justify-between -ml-[2px] -mr-[1px] text-[14px] text-[#3a8dc0]">
                  <span>草图原点</span>
                  <svg class="w-[11px] h-[7px]" viewBox="0 0 11 7"><path d="M1 6l4.500-5L10 6" fill="none" stroke="#2f86b8" stroke-width="1.700" /></svg>
                </div>
                <div class="mt-[4px] flex items-start">
                  <span class="mt-[9px]">指定点</span>
                  <div class="w-[24px] h-[24px] mt-[4px] ml-auto border border-[#aaa] relative">
                    <svg class="absolute left-[3px] top-[3px] w-[16px] h-[18px]" viewBox="0 0 16 18"><path d="M9 0v10M4 5h10" stroke="#222" stroke-width="1.200" /><path d="M1 9v9M1 13l5 4" stroke="#e07a20" stroke-width="1.500" /></svg>
                  </div>
                  <div class="w-[49px] h-[32px] ml-[2px] border border-[#aaa] flex items-center pl-[10px] pr-[7px] justify-between">
                    <svg class="w-[16px] h-[16px]" viewBox="0 0 16 16"><path d="M1 15L13 3" stroke="#222" /><circle cx="13" cy="3" r="2" fill="#d41818" /></svg>
                    <svg class="w-[6px] h-[4px]"><use href="#dd" /></svg>
                  </div>
                </div>
              </div>
            </div>

            <!-- scroll bar -->
            <div class="w-[15px] ml-px shrink-0 bg-[#f0f0f0] flex flex-col">
              <div class="h-[17px] flex items-center justify-center shrink-0">
                <svg class="w-[8px] h-[6px]" viewBox="0 0 8 6"><path d="M1 5l3-3 3 3" fill="none" stroke="#555" stroke-width="2" /></svg>
              </div>
              <div class="h-[248px] bg-[#c8c8c8] shrink-0"></div>
              <div class="flex-1 flex items-end justify-center pb-[5px]">
                <svg class="w-[8px] h-[6px]" viewBox="0 0 8 6"><path d="M1 1l3 3 3-3" fill="none" stroke="#555" stroke-width="2" /></svg>
              </div>
            </div>
          </div>

          <!-- dialog buttons -->
          <div class="flex justify-end pr-[15px] pt-[8px] gap-[5px]">
            <div class="w-[54px] h-[25px] bg-[#9ccbe4] border border-[#5ba5cc] flex items-center justify-center text-[#222] whitespace-pre">&lt; 确定 &gt;</div>
            <div class="w-[54px] h-[25px] bg-[#c8c8cb] border border-[#aaa] flex items-center justify-center text-[#333]">取消</div>
          </div>
        </div>
      </div>

      <!-- corner ribbon -->
      <div class="absolute left-[5px] top-[5px] w-[150px] h-[150px] bg-[#f40000] [clip-path:polygon(0_0,100%_0,0_100%)]"></div>
      <span class="absolute left-[-3px] top-[21px] w-[80px] text-center rotate-[-38deg] text-[25px] leading-[34px] font-bold text-[#111] font-['Liberation_Sans',sans-serif]">9SUG</span>
      <span class="absolute left-[-18px] top-[56px] w-[170px] text-center rotate-[-42deg] text-[23px] leading-[30px] font-bold text-white whitespace-nowrap font-['Liberation_Sans','Noto_Sans_CJK_SC',sans-serif]">学UG就上UG网</span>
    </div>
  </body>
</html>
